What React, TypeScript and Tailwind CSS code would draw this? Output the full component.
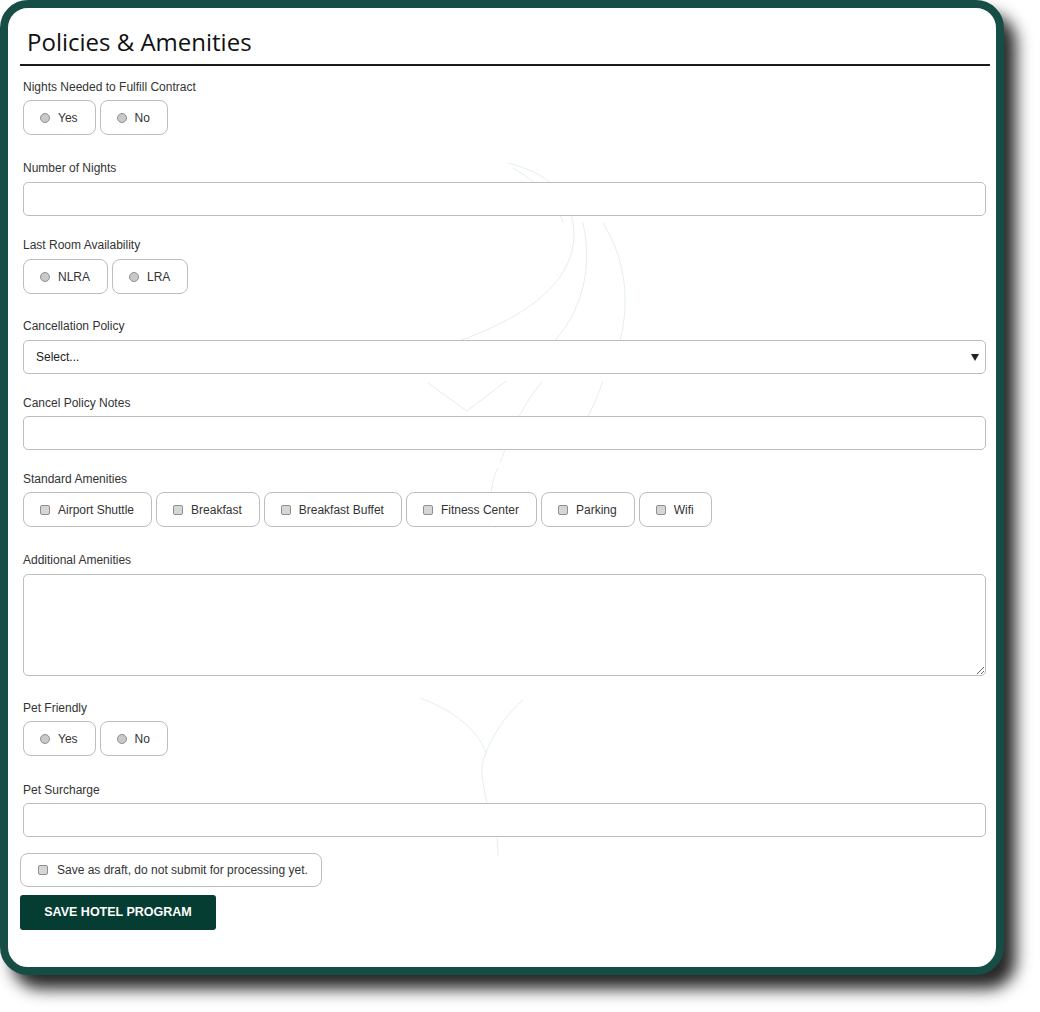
import type { ReactNode } from "react";

const font = { fontFamily: '"Liberation Sans", Arial, sans-serif' };

function Label({ children }: { children: ReactNode }) {
  return <div className="h-[14px] text-[12px] leading-[14px] text-[#333]">{children}</div>;
}

function Radio() {
  return <span className="inline-block h-[10px] w-[10px] shrink-0 rounded-full border border-[#8f8f8f] bg-[#c9c9c9]" />;
}

function Check() {
  return <span className="inline-block h-[10px] w-[10px] shrink-0 rounded-[2px] border border-[#8f8f8f] bg-[#d6d6d6]" />;
}

function Choice({ label, type }: { label: string; type: "radio" | "check" }) {
  return (
    <label className="flex h-[35px] items-center gap-[8px] rounded-[8px] border border-[#bdbdbd] bg-white pl-[16px] pr-[17px] text-[12px] text-[#333]">
      {type === "radio" ? <Radio /> : <Check />}
      <span>{label}</span>
    </label>
  );
}

function ChoiceRow({ items, type }: { items: string[]; type: "radio" | "check" }) {
  return (
    <div className="flex gap-[4px]">
      {items.map((i) => (
        <Choice key={i} label={i} type={type} />
      ))}
    </div>
  );
}

const inputCls = "block h-[34px] w-full rounded-[5px] border border-[#bdbdbd] bg-white px-[12px] text-[12px] outline-none";

function Watermark() {
  return (
    <svg className="pointer-events-none absolute left-0 top-0" width="1004" height="975" viewBox="0 0 1004 975" fill="none" stroke="#e4efec" strokeWidth="1">
      <path d="M500 155 C 540 165 560 185 565 215 C 572 260 540 305 433 339" />
      <path d="M505 160 C 530 175 548 190 555 215" />
      <path d="M575 215 C 585 260 575 305 540 340" />
      <path d="M595 215 C 620 255 622 300 610 340" />
      <path d="M420 375 L 459 403 L 498 373" />
      <path d="M535 373 C 515 395 505 420 492 455" />
      <path d="M595 373 C 585 400 580 410 575 415" />
      <path d="M490 460 C 480 480 482 500 488 520" />
      <path d="M412 690 C 440 700 470 720 478 745 C 470 760 475 775 480 800" />
      <path d="M515 692 C 500 705 485 725 478 745" />
      <path d="M488 805 L 490 848" />
    </svg>
  );
}

export default function App() {
  return (
    <div className="h-[1012px] w-[1040px] bg-white" style={font}>
      <div className="relative h-[975px] w-[1004px] rounded-[28px] border-[8px] border-[#164d45] bg-white shadow-[12px_14px_16px_rgba(0,0,0,0.85)]">
        <Watermark />
        <div className="relative pl-[12px] pr-[6px] pt-[18px]">
          <h1
            className="border-b-2 border-[#1a1a1a] pb-[6px] pl-[7px] text-[24px] leading-[32px] text-[#111]"
            style={{ fontFamily: '"Open Sans", "Noto Sans", sans-serif' }}
          >
            Policies &amp; Amenities
          </h1>

          <div className="pl-[3px] pr-[4px]">
            <div className="mt-[14px]">
              <Label>Nights Needed to Fulfill Contract</Label>
              <div className="mt-[6px]">
                <ChoiceRow items={["Yes", "No"]} type="radio" />
              </div>
            </div>

            <div className="mt-[26px]">
              <Label>Number of Nights</Label>
              <input className={`${inputCls} mt-[7px]`} />
            </div>

            <div className="mt-[22px]">
              <Label>Last Room Availability</Label>
              <div className="mt-[7px]">
                <ChoiceRow items={["NLRA", "LRA"]} type="radio" />
              </div>
            </div>

            <div className="mt-[25px]">
              <Label>Cancellation Policy</Label>
              <div className="relative mt-[7px]">
                <select className={`${inputCls} appearance-none text-[#222]`} defaultValue="">
                  <option value="">Select...</option>
                </select>
                <svg className="pointer-events-none absolute right-[7px] top-[14px]" width="8" height="7" viewBox="0 0 8 7">
                  <path d="M0 0 H8 L4 7 Z" fill="#222" />
                </svg>
              </div>
            </div>

            <div className="mt-[22px]">
              <Label>Cancel Policy Notes</Label>
              <input className={`${inputCls} mt-[6px]`} />
            </div>

            <div className="mt-[22px]">
              <Label>Standard Amenities</Label>
              <div className="mt-[6px]">
                <ChoiceRow
                  items={["Airport Shuttle", "Breakfast", "Breakfast Buffet", "Fitness Center", "Parking", "Wifi"]}
                  type="check"
                />
              </div>
            </div>

            <div className="mt-[26px]">
              <Label>Additional Amenities</Label>
              <textarea className="mt-[7px] block h-[102px] w-full rounded-[5px] border border-[#bdbdbd] bg-white p-[8px] text-[12px] outline-none" />
            </div>

            <div className="mt-[25px]">
              <Label>Pet Friendly</Label>
              <div className="mt-[6px]">
                <ChoiceRow items={["Yes", "No"]} type="radio" />
              </div>
            </div>

            <div className="mt-[27px]">
              <Label>Pet Surcharge</Label>
              <input className={`${inputCls} mt-[6px]`} />
            </div>
          </div>

          <label className="mt-[16px] flex h-[34px] w-[302px] items-center gap-[9px] rounded-[8px] border border-[#bdbdbd] pl-[17px] text-[12px] text-[#333]">
            <Check />
            <span>Save as draft, do not submit for processing yet.</span>
          </label>

          <button className="mt-[8px] h-[35px] w-[196px] rounded-[3px] bg-[#053d32] text-[12.5px] font-bold text-white">
            SAVE HOTEL PROGRAM
          </button>
        </div>
      </div>
    </div>
  );
}
